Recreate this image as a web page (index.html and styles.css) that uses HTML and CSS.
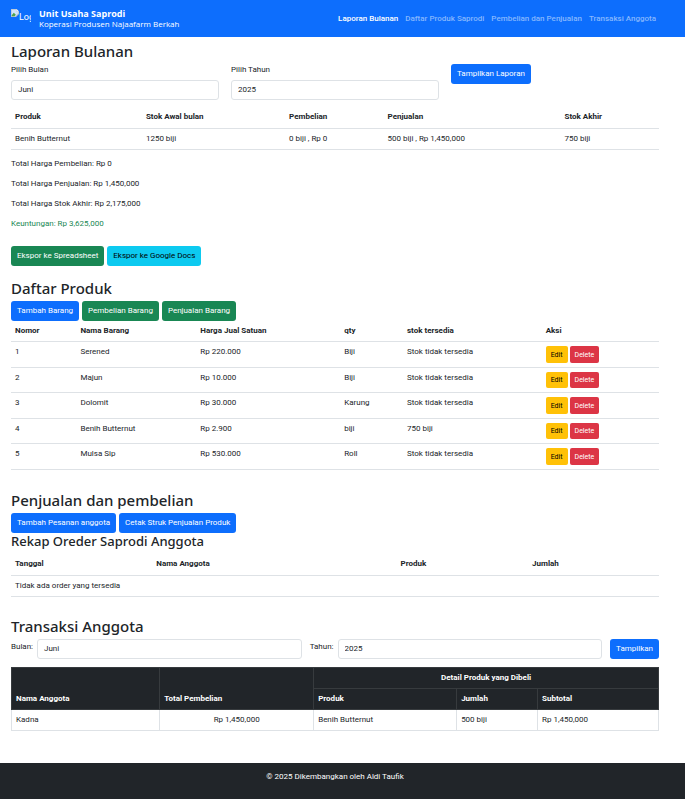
FILE: index.html
```html
<!DOCTYPE html>
<html lang="id">
<head>
<meta charset="utf-8">
<title>Unit Usaha Saprodi</title>
<link rel="stylesheet" href="styles.css">
</head>
<body>
<header class="navbar">
  <div class="navbar-inner">
    <a class="brand" href="#laporan">
      <span class="logo"><svg class="logo-icon" viewBox="0 0 8 8" width="8" height="8" aria-hidden="true"><path d="M0 0h5.5L8 2.500V8H0z" fill="#b9c3cf"/><path d="M.7.7h4.600v2.200h2V4L4.500 7.300H.7z" fill="#cfe3fb"/><path d="M.7 6.200 2.800 3.800l2 2L3.600 7.300H.7z" fill="#4fa24a"/><path d="M5.500 0v2.500H8z" fill="#f4f6f8"/><path d="M8 5 5 8H8z" fill="#0d6efd"/></svg><span>Logo</span></span>
      <span class="brand-text"><strong>Unit Usaha Saprodi</strong><span>Koperasi Produsen Najaafarm Berkah</span></span>
    </a>
    <nav class="nav">
      <a class="active" href="#laporan">Laporan Bulanan</a>
      <a href="#produk">Daftar Produk Saprodi</a>
      <a href="#penjualan">Pembelian dan Penjualan</a>
      <a href="#transaksi">Transaksi Anggota</a>
    </nav>
  </div>
</header>
<main>
  <section id="laporan" class="section">
    <h2>Laporan Bulanan</h2>
    <form class="report-form">
      <div class="field"><label for="bulan">Pilih Bulan</label><select id="bulan" class="control"><option>Juni</option></select></div>
      <div class="field"><label for="tahun">Pilih Tahun</label><select id="tahun" class="control"><option>2025</option></select></div>
      <div class="field"><button type="button" class="btn primary">Tampilkan Laporan</button></div>
    </form>
    <table class="table report-table">
      <thead><tr><th>Produk</th><th>Stok Awal bulan</th><th>Pembelian</th><th>Penjualan</th><th>Stok Akhir</th></tr></thead>
      <tbody><tr><td>Benih Butternut</td><td>1250 biji</td><td>0 biji , Rp 0</td><td>500 biji , Rp 1,450,000</td><td>750 biji</td></tr></tbody>
    </table>
    <div class="totals">
      <p>Total Harga Pembelian: Rp 0</p>
      <p>Total Harga Penjualan: Rp 1,450,000</p>
      <p>Total Harga Stok Akhir: Rp 2,175,000</p>
      <p class="profit">Keuntungan: Rp 3,625,000</p>
    </div>
    <div class="buttons">
      <button type="button" class="btn success">Ekspor ke Spreadsheet</button>
      <button type="button" class="btn info">Ekspor ke Google Docs</button>
    </div>
  </section>
  <section id="produk" class="section">
    <h2>Daftar Produk</h2>
    <div class="buttons">
      <button type="button" class="btn primary">Tambah Barang</button>
      <button type="button" class="btn success">Pembelian Barang</button>
      <button type="button" class="btn success">Penjualan Barang</button>
    </div>
    <table class="table product-table">
      <thead><tr><th>Nomor</th><th>Nama Barang</th><th>Harga Jual Satuan</th><th>qty</th><th>stok tersedia</th><th>Aksi</th></tr></thead>
      <tbody>
        <tr><td>1</td><td>Serened</td><td>Rp 220.000</td><td>Biji</td><td>Stok tidak tersedia</td><td><div class="actions"><button type="button" class="btn small warning">Edit</button><button type="button" class="btn small danger">Delete</button></div></td></tr>
        <tr><td>2</td><td>Majun</td><td>Rp 10.000</td><td>Biji</td><td>Stok tidak tersedia</td><td><div class="actions"><button type="button" class="btn small warning">Edit</button><button type="button" class="btn small danger">Delete</button></div></td></tr>
        <tr><td>3</td><td>Dolomit</td><td>Rp 30.000</td><td>Karung</td><td>Stok tidak tersedia</td><td><div class="actions"><button type="button" class="btn small warning">Edit</button><button type="button" class="btn small danger">Delete</button></div></td></tr>
        <tr><td>4</td><td>Benih Butternut</td><td>Rp 2.900</td><td>biji</td><td>750 biji</td><td><div class="actions"><button type="button" class="btn small warning">Edit</button><button type="button" class="btn small danger">Delete</button></div></td></tr>
        <tr><td>5</td><td>Mulsa Sip</td><td>Rp 530.000</td><td>Roll</td><td>Stok tidak tersedia</td><td><div class="actions"><button type="button" class="btn small warning">Edit</button><button type="button" class="btn small danger">Delete</button></div></td></tr>
      </tbody>
    </table>
  </section>
  <section id="penjualan" class="section">
    <h2>Penjualan dan pembelian</h2>
    <div class="buttons">
      <button type="button" class="btn primary">Tambah Pesanan anggota</button>
      <button type="button" class="btn primary">Cetak Struk Penjualan Produk</button>
    </div>
    <h3>Rekap Oreder Saprodi Anggota</h3>
    <table class="table order-table">
      <thead><tr><th>Tanggal</th><th>Nama Anggota</th><th>Produk</th><th>Jumlah</th></tr></thead>
      <tbody><tr><td colspan="4">Tidak ada order yang tersedia</td></tr></tbody>
    </table>
  </section>
  <section id="transaksi" class="section">
    <h2>Transaksi Anggota</h2>
    <form class="filter-form">
      <label for="bulan2">Bulan:</label><select id="bulan2" class="control"><option>Juni</option></select>
      <label for="tahun2">Tahun:</label><select id="tahun2" class="control"><option>2025</option></select>
      <button type="button" class="btn primary">Tampilkan</button>
    </form>
    <table class="table bordered">
      <colgroup><col class="c-name"><col class="c-total"><col class="c-product"><col class="c-qty"><col class="c-sub"></colgroup>
      <thead>
        <tr><th rowspan="2">Nama Anggota</th><th rowspan="2">Total Pembelian</th><th colspan="3" class="center">Detail Produk yang Dibeli</th></tr>
        <tr><th>Produk</th><th>Jumlah</th><th>Subtotal</th></tr>
      </thead>
      <tbody><tr><td>Kadna</td><td class="center">Rp 1,450,000</td><td>Benih Butternut</td><td>500 biji</td><td>Rp 1,450,000</td></tr></tbody>
    </table>
  </section>
</main>
<footer class="footer"><p>© 2025 Dikembangkan oleh Aldi Taufik</p></footer>
</body>
</html>
```
FILE: styles.css
```css
* { box-sizing: border-box; }
body {
  margin: 0;
  background: #fff;
  color: #212529;
  font-family: Roboto, "Noto Sans", sans-serif;
  font-size: 8px;
  line-height: 12px;
}
h2, h3, p { margin: 0; }
h2, h3 { font-family: "Noto Sans", "Open Sans", sans-serif; font-weight: 500; }
h2 { font-size: 15px; line-height: 18px; margin-bottom: 4px; }
h3 { font-size: 13px; line-height: 17px; margin-bottom: 4px; }
button, select { font: inherit; color: inherit; }
a { color: inherit; text-decoration: none; }

.navbar { background: #0d6efd; color: #fff; }
.navbar-inner {
  display: flex;
  align-items: center;
  justify-content: space-between;
  min-height: 37px;
  padding: 0 29px 0 11px;
}
.brand { display: flex; gap: 8px; align-items: center; }
.logo { display: flex; width: 20px; height: 20px; overflow: hidden; }
.logo-icon { flex: none; }
.logo span { font-size: 9px; line-height: 16px; }
.brand-text {
  display: flex;
  flex-direction: column;
  font-family: "Open Sans", "Noto Sans", sans-serif;
  line-height: 10px;
}
.brand-text strong { font-size: 9px; }
.nav { display: flex; gap: 7px; font-weight: 500; color: #86b7fe; }
.nav .active { color: #fff; }

main { padding: 5px 26px 0 11px; }
.section { padding-bottom: 13px; }
.report-form { display: grid; grid-template-columns: 208px 208px 1fr; gap: 12px; }
.field { display: flex; flex-direction: column; gap: 4px; align-items: flex-start; }
.control {
  appearance: none;
  width: 100%;
  min-width: 0;
  height: 20px;
  padding: 0 6px;
  border: 1px solid #dee2e6;
  border-radius: 3px;
  background: #fff;
}
.btn {
  height: 20px;
  padding: 0 6px;
  border: 0;
  border-radius: 3px;
  color: #fff;
  white-space: nowrap;
}
.primary { background: #0d6efd; }
.success { background: #198754; }
.info { background: #0dcaf0; color: #000; }
.warning { background: #ffc107; color: #000; }
.danger { background: #dc3545; }
.small { height: 17px; padding: 0 5px; border-radius: 2px; font-size: 7px; }
.buttons { display: flex; gap: 3px; }
.actions { display: flex; gap: 2px; }

.table { width: 100%; border-collapse: collapse; table-layout: fixed; }
.table th, .table td {
  height: 21px;
  padding: 4px;
  border-bottom: 1px solid #dee2e6;
  text-align: left;
  vertical-align: top;
}
.table th { font-weight: 700; }
.report-table { margin: 7px 0 8px; }
.report-table th:nth-child(1) { width: 20.2%; }
.report-table th:nth-child(2) { width: 22.1%; }
.report-table th:nth-child(3) { width: 15.2%; }
.report-table th:nth-child(4) { width: 27.3%; }
.totals { display: grid; gap: 8px; margin-bottom: 16px; }
.profit { color: #198754; }
.product-table { margin-bottom: 8px; }
.product-table th:nth-child(1) { width: 10.1%; }
.product-table th:nth-child(2) { width: 18.5%; }
.product-table th:nth-child(3) { width: 22.2%; }
.product-table th:nth-child(4) { width: 9.7%; }
.product-table th:nth-child(5) { width: 21.4%; }
.product-table tr:nth-child(even) .small { height: 16px; }
.order-table { margin-bottom: 7px; }
.order-table th:nth-child(1) { width: 21.8%; }
.order-table th:nth-child(2) { width: 37.7%; }
.order-table th:nth-child(3) { width: 20.3%; }
.filter-form { display: flex; gap: 8px; margin-bottom: 8px; }
.filter-form label { margin: 2px -4px 0 0; }
.filter-form .control { flex: 1; }
.bordered th, .bordered td { border: 1px solid #dee2e6; }
.bordered th { background: #212529; color: #fff; border-color: #373b3e; vertical-align: bottom; }
.bordered .center { text-align: center; }
.c-name { width: 22.9%; }
.c-total { width: 23.8%; }
.c-product { width: 22.1%; }
.c-qty { width: 12.5%; }
.footer {
  min-height: 36px;
  margin-top: 19px;
  padding: 8px 15px 0 0;
  background: #212529;
  color: #fff;
  text-align: center;
}
```
